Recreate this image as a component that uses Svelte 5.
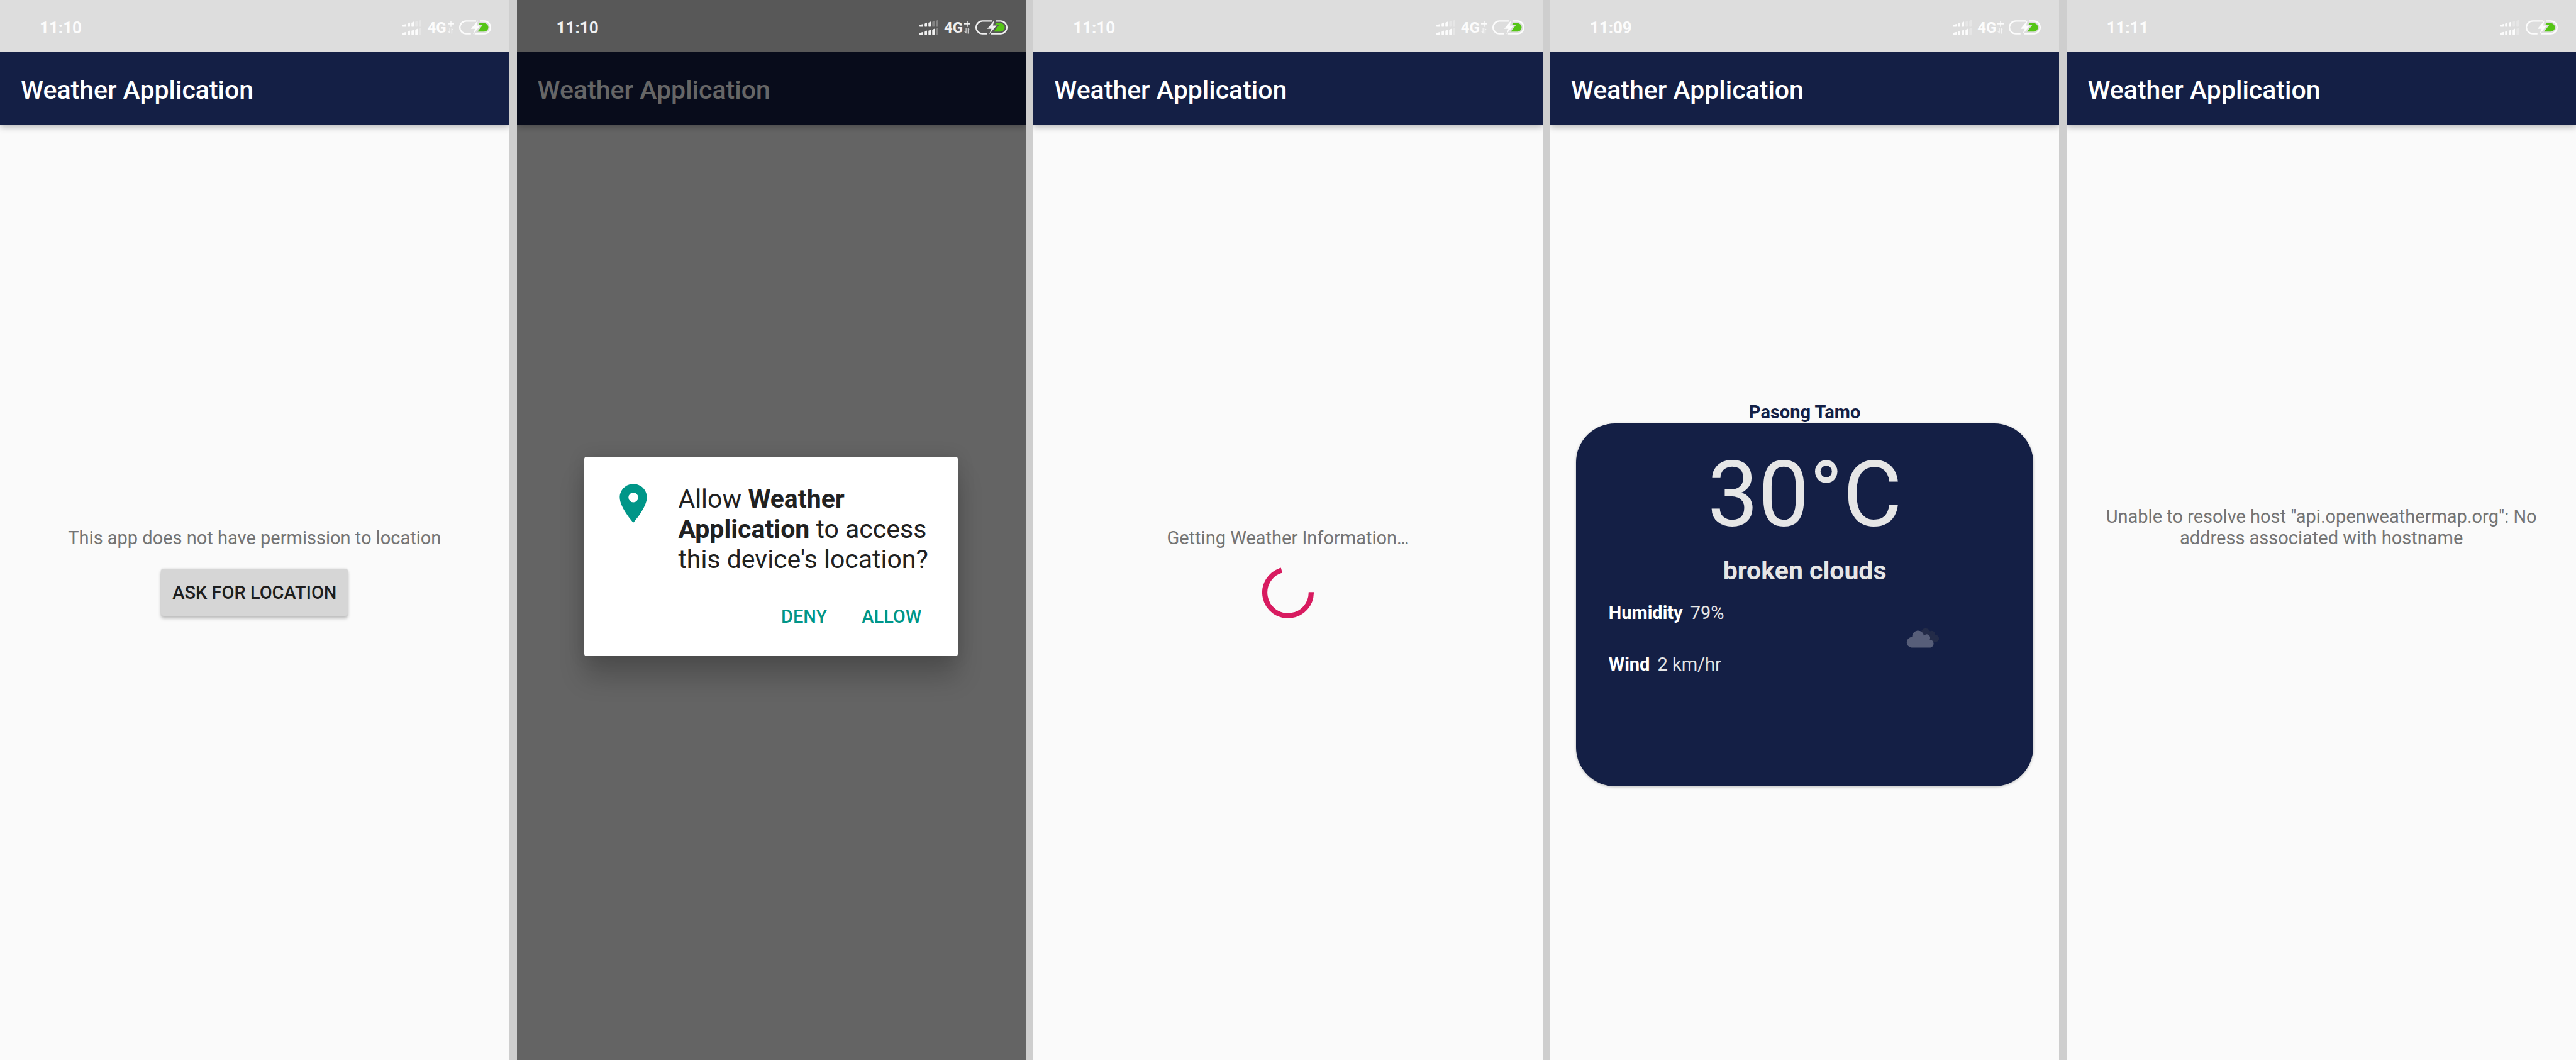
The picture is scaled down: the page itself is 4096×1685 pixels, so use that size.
<script>
  const screens = [
    { id: 'permission', time: '11:10', network: true },
    { id: 'dialog', time: '11:10', network: true },
    { id: 'loading', time: '11:10', network: true },
    { id: 'weather', time: '11:09', network: true },
    { id: 'error', time: '11:11', network: false }
  ];
  const bars = [
    { x: 0, h: 5 },
    { x: 11, h: 8 },
    { x: 19, h: 10 },
    { x: 27, h: 12 },
    { x: 35, h: 14 }
  ];
</script>

{#snippet signalRow(base, lit)}
  {#each bars as bar, i}
    {@const w = i === 0 ? 8 : 5}
    <path
      d="M{bar.x} {base - bar.h + 2} q0 -1 1 -1 L{bar.x + w} {base - bar.h - 1} V{base - 1} q0 1 -1 1 H{bar.x + 1} q-1 0 -1 -1 Z"
      opacity={i < lit ? 1 : 0.3}
    />
  {/each}
{/snippet}

<main class="gallery">
  {#each screens as screen (screen.id)}
    <section class="phone" class:dimmed={screen.id === 'dialog'}>
      <div class="status">
        <span class="clock">{screen.time}</span>
        <div class="indicators">
          <svg class="signal" viewBox="0 0 40 32" aria-hidden="true">
            {@render signalRow(14, 3)}
            {@render signalRow(31, 4)}
          </svg>
          {#if screen.network}
            <div class="network">
              <span>4G</span>
              <svg class="data" viewBox="0 0 14 28" aria-hidden="true">
                <path d="M6 0h2v5h6v2.500H8V13H6V7.500H0V5h6z" />
                <path opacity="0.75" d="M3.500 15.500h1.800V28L0 23.500h3.500zM8 28V15l5 4.500h-3V28z" />
              </svg>
            </div>
          {/if}
          <svg class="battery" viewBox="0 0 68 30" aria-hidden="true">
            <path
              class="shell"
              d="M36 1.500H15a13.500 13.500 0 0 0 0 27h10M44 1.500h9a13.500 13.500 0 0 1 0 27H33"
            />
            <path class="charge" d="M43 6h10a9 9 0 0 1 0 18H39l11-14h-8z" />
            <path class="bolt" d="M40 0L25 18h9l-5 12L45 11h-8z" />
          </svg>
        </div>
      </div>

      <div class="app">
        <header class="bar"><h1>Weather Application</h1></header>
        <div class="content {screen.id}">
          {#if screen.id === 'permission'}
            <p class="note">This app does not have permission to location</p>
            <button class="ask" type="button">ASK FOR LOCATION</button>
          {:else if screen.id === 'loading'}
            <p class="note">Getting Weather Information…</p>
            <svg class="spinner" viewBox="0 0 110 110" role="img" aria-label="Loading">
              <path d="M104.500 54A49.500 49.500 0 1 1 41.400 7.400" />
            </svg>
          {:else if screen.id === 'weather'}
            <h2 class="city">Pasong Tamo</h2>
            <article class="card">
              <p class="temperature">30°C</p>
              <p class="summary">broken clouds</p>
              <div class="details">
                <dl>
                  <div><dt>Humidity</dt><dd>79%</dd></div>
                  <div><dt>Wind</dt><dd>2 km/hr</dd></div>
                </dl>
                <svg class="clouds" viewBox="0 3 100 100" role="img" aria-label="Broken clouds">
                  <path
                    class="back"
                    d="M58 45V39A10 10 0 0 1 77 37A7.500 7.500 0 0 1 88 45A7.300 7.300 0 1 1 88 59.500H74z"
                  />
                  <path
                    class="front"
                    d="M38 71.500a11 11 0 0 1 1.500-22A12.300 12.300 0 1 1 64 46.300A7.500 7.500 0 0 1 76.500 54.500A8.600 8.600 0 0 1 78 71.500z"
                  />
                </svg>
              </div>
            </article>
          {:else if screen.id === 'error'}
            <p class="note">
              Unable to resolve host "api.openweathermap.org": No address associated with hostname
            </p>
          {/if}
        </div>

        {#if screen.id === 'dialog'}
          <div class="scrim">
            <div class="prompt" role="dialog" aria-labelledby="prompt-text">
              <div class="message">
                <svg class="pin" viewBox="0 0 24 24" aria-hidden="true">
                  <path
                    d="M12 2C8.130 2 5 5.130 5 9c0 5.250 7 13 7 13s7-7.750 7-13c0-3.870-3.130-7-7-7zm0 9.500a2.500 2.500 0 1 1 0-5 2.500 2.500 0 0 1 0 5z"
                  />
                </svg>
                <p id="prompt-text">
                  Allow <strong>Weather Application</strong> to access this device's location?
                </p>
              </div>
              <div class="actions">
                <button type="button">DENY</button>
                <button type="button">ALLOW</button>
              </div>
            </div>
          </div>
        {/if}
      </div>
    </section>
  {/each}
</main>

<style>
  :global(body) {
    margin: 0;
    background: #cecece;
  }
  h1, h2, p, dl, dd {
    margin: 0;
  }
  button {
    border: 0;
    padding: 0;
    background: none;
    font: inherit;
    cursor: pointer;
  }
  .gallery {
    display: grid;
    grid-template-columns: repeat(5, 1fr);
    gap: 12px;
    min-height: 100vh;
    font-family: Roboto, sans-serif;
    font-size: 29px;
    line-height: 34px;
    color: #747474;
  }
  .phone {
    display: flex;
    flex-direction: column;
    min-width: 0;
    background: #fafafa;
  }
  .status {
    display: flex;
    align-items: center;
    justify-content: space-between;
    box-sizing: border-box;
    height: 83px;
    padding: 4px 29px 0 63px;
    background: #dddddd;
    color: #fcfcfc;
    fill: #fcfcfc;
    font-size: 26px;
    font-weight: 700;
  }
  .dimmed .status {
    background: #585858;
    color: #f0f0f0;
    fill: #f0f0f0;
  }
  .indicators {
    display: flex;
    align-items: center;
    gap: 8px;
  }
  .signal {
    width: 30px;
    height: 24px;
    margin-right: 3px;
  }
  .network {
    display: flex;
    align-items: center;
    gap: 2px;
    margin-left: -2px;
    font-size: 24px;
  }
  .data {
    width: 10px;
    height: 21px;
  }
  .battery {
    width: 51px;
    height: 23px;
  }
  .shell {
    fill: none;
    stroke: #fcfcfc;
    stroke-width: 3;
  }
  .dimmed .shell {
    stroke: #f0f0f0;
  }
  .charge {
    fill: #55c516;
  }
  .app {
    position: relative;
    display: flex;
    flex: 1;
    flex-direction: column;
    overflow: hidden;
  }
  .bar {
    display: flex;
    align-items: center;
    box-sizing: border-box;
    height: 115px;
    padding: 4px 33px 0;
    background: #141f45;
    box-shadow: 0 4px 10px rgba(0, 0, 0, 0.28);
    color: #ffffff;
  }
  h1 {
    font-size: 41px;
    font-weight: 500;
    line-height: 48px;
  }
  .content {
    display: grid;
    flex: 1;
    grid-template-rows: 1fr auto 1fr;
    justify-items: center;
    padding: 0 41px;
    text-align: center;
  }
  .note {
    align-self: end;
  }
  .permission .note {
    margin-bottom: 32px;
  }
  .loading .note {
    margin-bottom: 29px;
  }
  .error .note {
    margin-bottom: 70px;
  }
  .ask {
    height: 75px;
    padding: 0 18px;
    border-radius: 4px;
    background: #d6d6d6;
    box-shadow: 0 4px 5px rgba(0, 0, 0, 0.25), 0 0 3px rgba(0, 0, 0, 0.12);
    color: #1e1e1e;
    font-weight: 500;
  }
  .spinner {
    width: 82px;
    height: 82px;
    fill: none;
    stroke: #d81b60;
    stroke-width: 11;
  }
  .content.weather {
    display: flex;
    flex-direction: column;
    justify-content: center;
  }
  .city {
    padding-top: 4px;
    color: #141f45;
    font-size: 29px;
    font-weight: 700;
    line-height: 36px;
  }
  .card {
    box-sizing: border-box;
    min-height: 577px;
    padding: 30px 52px;
    border-radius: 62px;
    background: #141f45;
    box-shadow: 0 1px 4px rgba(0, 0, 0, 0.25);
    color: #e6e6e6;
  }
  .temperature {
    font-size: 144px;
    line-height: 168px;
  }
  .summary {
    margin-top: 12px;
    font-size: 41px;
    font-weight: 700;
    line-height: 48px;
  }
  .details {
    display: grid;
    grid-template-columns: 1fr 1fr;
    align-items: center;
    margin: 26px -31px 0 0;
  }
  dl {
    display: grid;
    gap: 48px;
  }
  dl div {
    display: flex;
    gap: 12px;
  }
  dt {
    color: #ffffff;
    font-weight: 700;
  }
  .clouds {
    justify-self: center;
    width: 75px;
    height: 75px;
  }
  .back {
    fill: #232b48;
  }
  .front {
    fill: #575e79;
  }
  .scrim {
    position: absolute;
    inset: 0;
    display: flex;
    align-items: center;
    justify-content: center;
    background: rgba(0, 0, 0, 0.6);
  }
  .prompt {
    box-sizing: border-box;
    width: 594px;
    padding: 37px 41px 42px;
    border-radius: 4px;
    background: #ffffff;
    box-shadow: 0 34px 40px rgba(0, 0, 0, 0.2), 0 0 28px rgba(0, 0, 0, 0.12);
    color: #212121;
  }
  .message {
    display: flex;
    gap: 34px;
  }
  .message p {
    padding-top: 6px;
    font-size: 41px;
    line-height: 48px;
  }
  .pin {
    flex: none;
    width: 74px;
    height: 74px;
    fill: #009688;
  }
  .actions {
    display: flex;
    justify-content: flex-end;
    gap: 55px;
    padding: 46px 17px 0 0;
  }
  .actions button {
    height: 42px;
    color: #009688;
    font-weight: 500;
  }
</style>
